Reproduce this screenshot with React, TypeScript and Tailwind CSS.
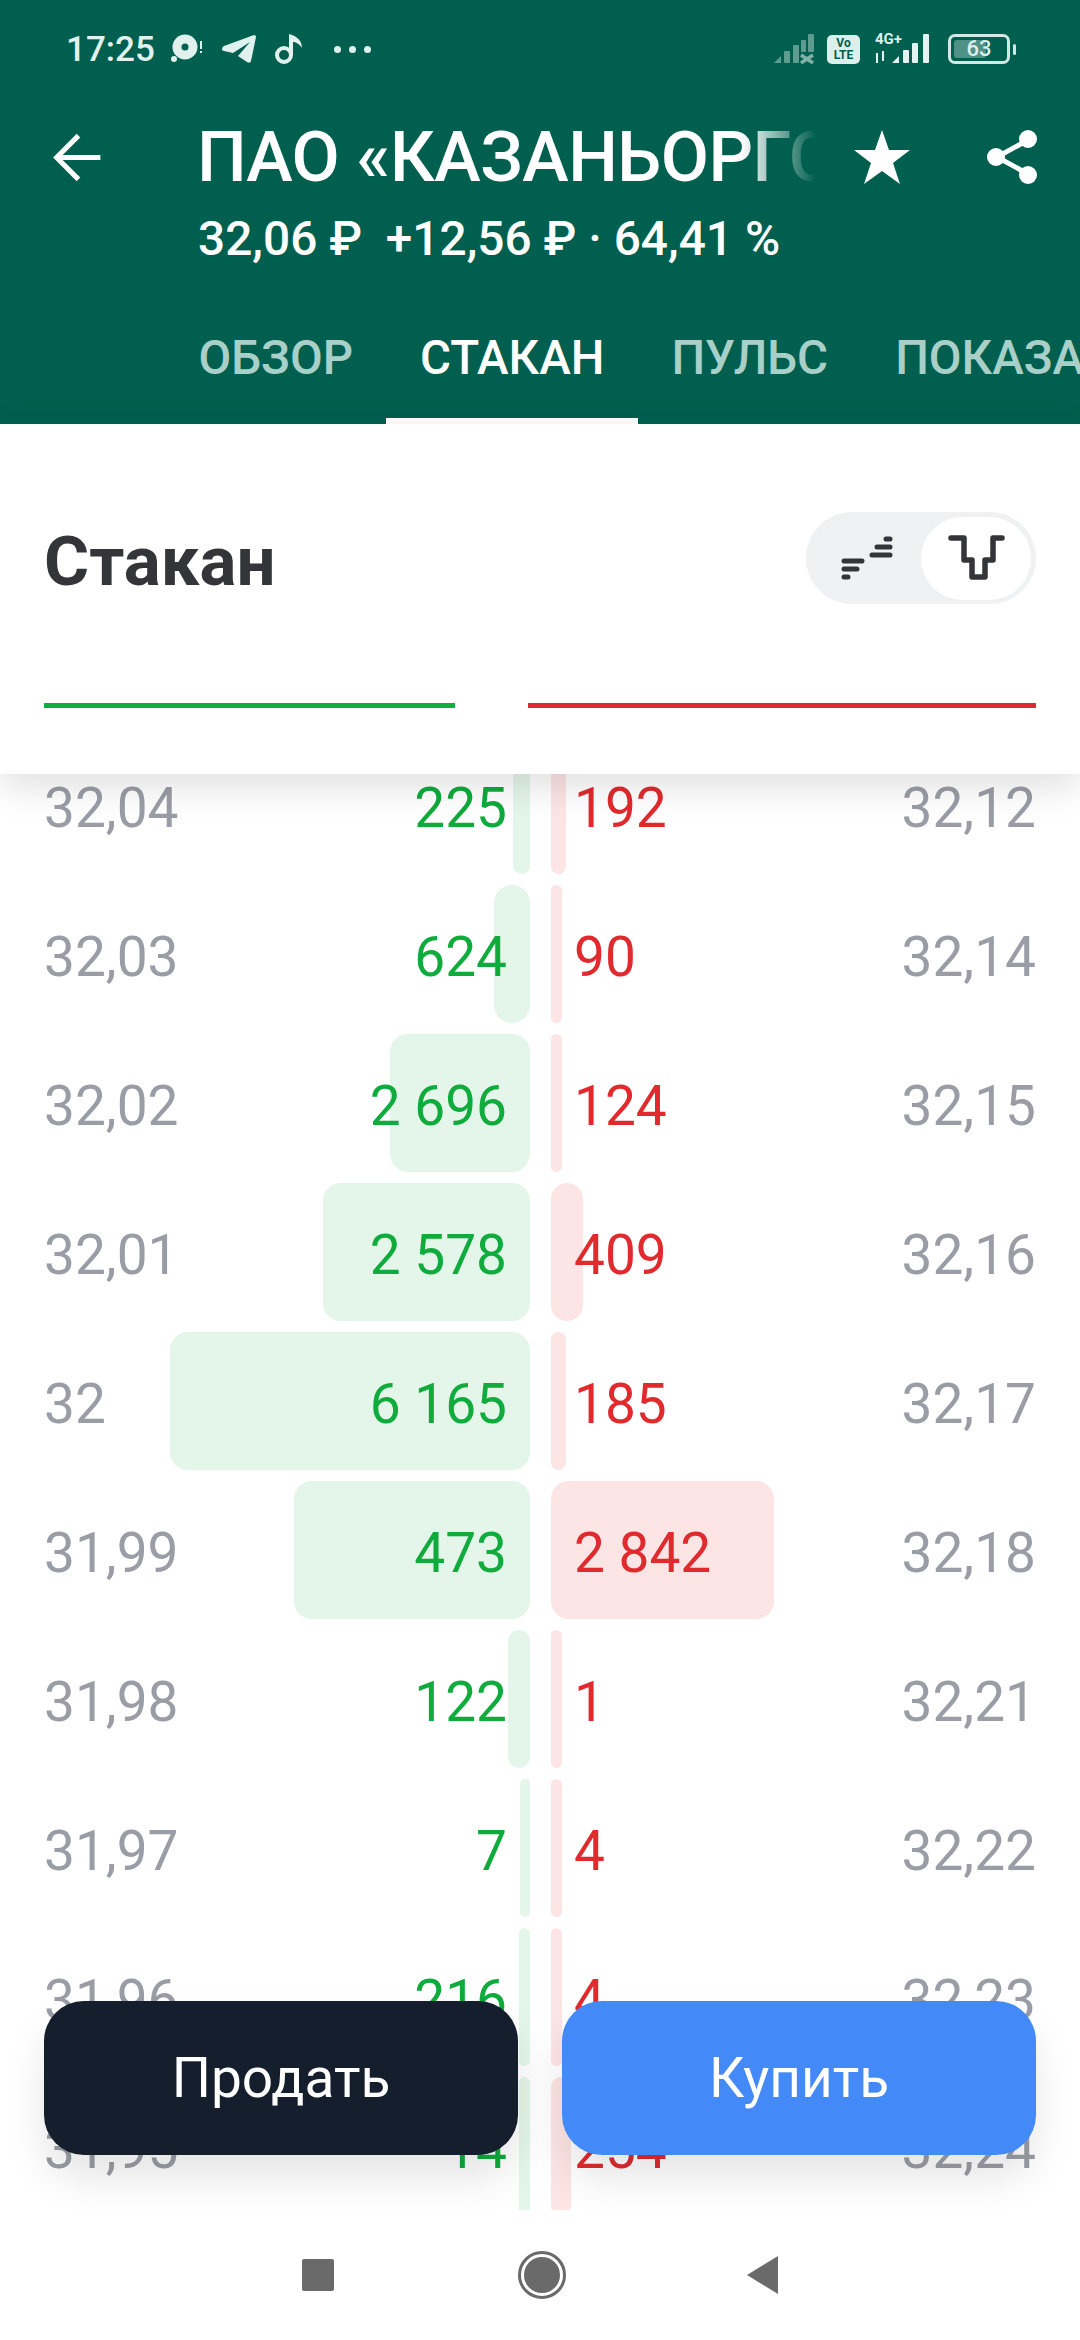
import { ArrowLeft } from 'lucide-react'

// [bid price, bid volume, bid bar width, ask volume, ask bar width, ask price]
const ROWS: [string, string, number, string, number, string][] = [
  ['32,04', '225', 17, '192', 15, '32,12'],
  ['32,03', '624', 36, '90', 11, '32,14'],
  ['32,02', '2 696', 140, '124', 11, '32,15'],
  ['32,01', '2 578', 207, '409', 32, '32,16'],
  ['32', '6 165', 360, '185', 15, '32,17'],
  ['31,99', '473', 236, '2 842', 223, '32,18'],
  ['31,98', '122', 22, '1', 11, '32,21'],
  ['31,97', '7', 10, '4', 11, '32,22'],
  ['31,96', '216', 11, '4', 11, '32,23'],
  ['31,95', '14', 11, '254', 20, '32,24'],
]

const TABS = ['ОБЗОР', 'СТАКАН', 'ПУЛЬС', 'ПОКАЗАТЕЛИ']

function StatusLeft() {
  return (
    <div className="flex items-center">
      <span className="text-[35px] font-medium leading-none text-[#e0f1ee] w-[104px]">17:25</span>
      <svg width="34" height="32" viewBox="0 0 34 32" className="mr-[17px]">
        <circle cx="15" cy="14" r="12.5" fill="#e0f1ee" />
        <circle cx="15" cy="14" r="3.5" fill="#005f4e" />
        <circle cx="4" cy="26" r="3" fill="#e0f1ee" />
        <rect x="30" y="8" width="2" height="8" fill="#e0f1ee" />
        <rect x="30" y="18" width="2" height="2" fill="#e0f1ee" />
      </svg>
      <svg width="36" height="30" viewBox="0 0 36 30" className="mr-[17px]">
        <path d="M1 15 Q1 13 3 12 L33 1 Q35 1 35 3 L30 27 Q29 30 26 28 L17 22 L29 8 L12 19 L3 17 Q1 17 1 15 Z" fill="#e0f1ee" />
      </svg>
      <svg width="30" height="32" viewBox="0 0 30 32" className="mr-[30px]">
        <circle cx="10" cy="22" r="7" fill="none" stroke="#e0f1ee" strokeWidth="4" />
        <path d="M15 22 V1 C19 2 28 5 28 15 C25 10 21 9 19 9 V22 Z" fill="#e0f1ee" />
      </svg>
      <div className="flex gap-[8px]">
        <span className="w-[7px] h-[7px] rounded-full bg-[#e0f1ee]" />
        <span className="w-[7px] h-[7px] rounded-full bg-[#e0f1ee]" />
        <span className="w-[7px] h-[7px] rounded-full bg-[#e0f1ee]" />
      </div>
    </div>
  )
}

function StatusRight() {
  return (
    <div className="flex items-center">
      <svg width="42" height="30" viewBox="0 0 42 30" className="mr-[12px]" fill="#5f9c90">
        <path d="M1 29 L8 22 V29 Z" />
        <rect x="11" y="17" width="6" height="12" rx="1" />
        <rect x="20" y="11" width="6" height="18" rx="1" />
        <rect x="28" y="6" width="5" height="12" rx="1" />
        <rect x="35" y="0" width="6" height="18" rx="1" />
        <path d="M28 21 L40 29 M40 21 L28 29" stroke="#7fb1a7" strokeWidth="3.5" />
      </svg>
      <div className="w-[33px] h-[29px] mr-[15px] rounded-[5px] bg-[#dcefec] flex flex-col items-center justify-center text-[#005f4e] text-[12px] font-bold leading-[12px]">
        <span>Vo</span>
        <span>LTE</span>
      </div>
      <div className="relative w-[56px] h-[30px] mr-[17px]">
        <span className="absolute left-0 top-[-2px] text-[15px] font-bold leading-[14px] text-[#dcefec]">4G+</span>
        <svg width="56" height="30" viewBox="0 0 56 30" fill="#e6f3f1">
          <rect x="1" y="19" width="2" height="10" />
          <rect x="7" y="17" width="2" height="10" />
          <path d="M17 29 L24 22 V29 Z" />
          <rect x="28" y="16" width="6" height="13" rx="1" />
          <rect x="37" y="9" width="6" height="20" rx="1" />
          <rect x="48" y="0" width="6" height="29" rx="1" />
        </svg>
      </div>
      <div className="w-[62px] h-[30px] rounded-[7px] border-[3px] border-[#d4e9e5] p-[3px] relative flex items-center">
        <div className="w-[32px] h-full rounded-[3px] bg-[#4f9184]" />
        <span className="absolute inset-0 flex items-center justify-center text-[#dcefec] text-[22px] font-medium leading-none">63</span>
      </div>
      <div className="w-[3px] h-[11px] ml-[3px] rounded-full bg-[#d4e9e5]" />
    </div>
  )
}

function Header() {
  return (
    <header className="bg-[#005f4e] h-[424px] shrink-0 text-white flex flex-col">
      <div className="h-[98px] pl-[66px] pr-[64px] flex items-center justify-between">
        <StatusLeft />
        <StatusRight />
      </div>
      <div className="h-[118px] flex items-center">
        <ArrowLeft className="ml-[41px] mr-[81px] shrink-0" size={75} strokeWidth={1.6} strokeLinecap="butt" strokeLinejoin="miter" />
        <div className="w-[619px] overflow-hidden whitespace-nowrap text-[70px] font-medium leading-none tracking-[-0.5px] [mask-image:linear-gradient(to_right,black_88%,transparent_100%)]">
          ПАО «КАЗАНЬОРГСИНТЕЗ»
        </div>
        <svg width="56" height="54" viewBox="0 0 56 54" className="ml-[38px] shrink-0" fill="white">
          <path d="M28 0 L35 20 L56 20 L39 33 L46 54 L28 41 L10 54 L17 33 L0 20 L21 20 Z" />
        </svg>
        <svg width="52" height="56" viewBox="0 0 52 56" className="ml-[77px] shrink-0" fill="white" stroke="white">
          <path d="M41 11 L10 28 L41 45" fill="none" strokeWidth="5" />
          <circle cx="41" cy="10" r="9" stroke="none" />
          <circle cx="9" cy="28" r="9" stroke="none" />
          <circle cx="41" cy="46" r="9" stroke="none" />
        </svg>
      </div>
      <div className="pl-[198px] text-[47.8px] font-medium leading-[52px] whitespace-nowrap -mt-[3px]">
        32,06 ₽&nbsp; +12,56 ₽ · 64,41 %
      </div>
      <div className="mt-auto h-[120px] pl-[165px] flex overflow-hidden whitespace-nowrap text-[47.5px] font-medium">
        {TABS.map((t, i) => (
          <div
            key={t}
            className={`h-full px-[33.5px] flex items-center pb-[5px] border-b-[6px] ${
              i === 1 ? 'text-white border-white' : 'text-[#a8cfc8] border-transparent'
            }`}
          >
            {t}
          </div>
        ))}
      </div>
    </header>
  )
}

function Panel() {
  return (
    <section className="relative z-10 bg-white h-[350px] shrink-0 px-[44px] pt-[88px] shadow-[0_12px_36px_rgba(0,0,0,0.13)]">
      <div className="h-[92px] flex items-center justify-between">
        <h1 className="text-[69px] font-bold leading-none pt-[6px] text-[#333538]">Стакан</h1>
        <div className="w-[230px] h-[92px] rounded-full bg-[#eff1f2] flex items-center pr-[5px]">
          <div className="flex-1 flex justify-center pl-[6px]">
            <svg width="54" height="44" viewBox="839 533 54 44" fill="none" stroke="#333538" strokeWidth="5" strokeLinecap="round">
              <path d="M843 558 H861 M843 566 H856 M843 574 H847 M871 552 H889 M876 544 H889 M885 536 H889" />
            </svg>
          </div>
          <div className="w-[110px] h-[83px] rounded-full bg-white flex items-center justify-center">
            <svg width="58" height="48" viewBox="945 534 58 48" fill="none" stroke="#333538" strokeWidth="5.5" strokeLinecap="round" strokeLinejoin="round">
              <path d="M949 538 H962 V560 H970 V577 H983 V560 H991 V538 H1000" />
            </svg>
          </div>
        </div>
      </div>
      <div className="mt-[99px] flex justify-between">
        <div className="w-[411px] h-[5px] bg-[#10b03c]" />
        <div className="w-[508px] h-[5px] bg-[#dd2c2f]" />
      </div>
    </section>
  )
}

function BookRow({ row }: { row: (typeof ROWS)[number] }) {
  const [bid, bidVol, bidW, askVol, askW, ask] = row
  return (
    <div className="h-[138px] mb-[11px] flex gap-[21px] text-[55px] leading-none">
      <div className="relative w-[530px] shrink-0 pl-[44px] pr-[23px] flex items-center justify-between">
        <div className="absolute inset-y-0 right-0 rounded-[18px] bg-[#e4f6e9]" style={{ width: bidW }} />
        <span className="relative pt-[6px] text-[#9a9da5]">{bid}</span>
        <span className="relative pt-[6px] text-[#0fab3c]">{bidVol}</span>
      </div>
      <div className="relative flex-1 pl-[23px] pr-[44px] flex items-center justify-between">
        <div className="absolute inset-y-0 left-0 rounded-[18px] bg-[#fde4e5]" style={{ width: askW }} />
        <span className="relative pt-[6px] text-[#e12a2e]">{askVol}</span>
        <span className="relative pt-[6px] text-[#9a9da5]">{ask}</span>
      </div>
    </div>
  )
}

export default function App() {
  return (
    <div className="w-[1080px] h-[2340px] flex flex-col overflow-hidden bg-white [font-family:Roboto,sans-serif]">
      <Header />
      <Panel />
      <div className="relative flex-1 -mt-[38px] overflow-hidden">
        {ROWS.map((r) => (
          <BookRow key={r[0]} row={r} />
        ))}
        <div className="absolute left-[44px] right-[44px] bottom-[55px] flex gap-[44px] text-[55px] text-white">
          <button className="flex-1 h-[154px] rounded-[40px] bg-[#141e2d] shadow-[0_24px_40px_rgba(0,0,0,0.1)]">Продать</button>
          <button className="flex-1 h-[154px] rounded-[40px] bg-[#4489f8] shadow-[0_24px_40px_rgba(0,0,0,0.1)]">Купить</button>
        </div>
      </div>
      <nav className="h-[130px] shrink-0 bg-white flex items-center justify-center gap-[184px]">
        <div className="w-[32px] h-[32px] rounded-[2px] bg-[#6a6a6a]" />
        <div className="w-[48px] h-[48px] rounded-full border-[3px] border-[#6a6a6a] p-[3px]">
          <div className="w-full h-full rounded-full bg-[#6a6a6a]" />
        </div>
        <svg width="32" height="38" viewBox="0 0 32 38" fill="#6a6a6a" className="-ml-[3px]">
          <path d="M31 0 V38 L0 19 Z" />
        </svg>
      </nav>
    </div>
  )
}
